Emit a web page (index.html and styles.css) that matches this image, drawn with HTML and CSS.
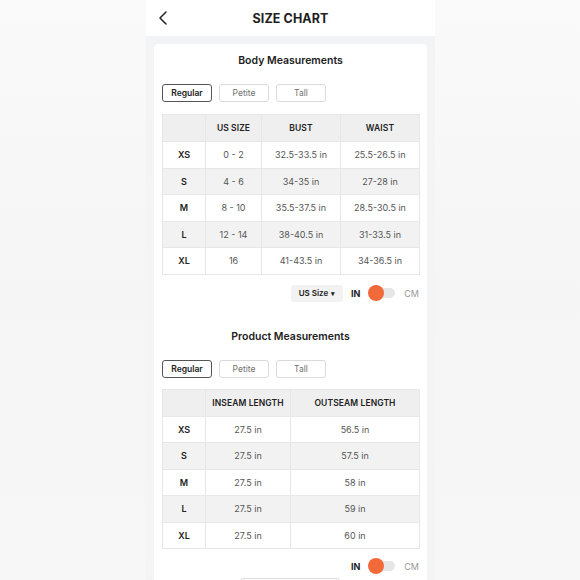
FILE: index.html
```html
<!DOCTYPE html>
<html>
<head>
<meta charset="utf-8">
<link rel="stylesheet" href="styles.css">
</head>
<body>
<div class="phone">
  <header class="header">
    <svg class="back" width="10" height="14" viewBox="0 0 10 14"><polyline points="8,1 2,7 8,13" fill="none" stroke="#222" stroke-width="1.5" stroke-linecap="round" stroke-linejoin="round"/></svg>
    <h1 class="title">SIZE CHART</h1>
  </header>
  <div class="content">
    <div class="card">
      <h2 class="section-title">Body Measurements</h2>
      <div class="tabs">
        <span class="tab active">Regular</span>
        <span class="tab">Petite</span>
        <span class="tab">Tall</span>
      </div>
      <table class="chart">
        <colgroup><col style="width:43px"><col style="width:56px"><col style="width:79px"><col style="width:79px"></colgroup>
        <tr class="head"><th></th><th>US SIZE</th><th>BUST</th><th>WAIST</th></tr>
        <tr><th>XS</th><td>0 - 2</td><td>32.5-33.5 in</td><td>25.5-26.5 in</td></tr>
        <tr class="alt"><th>S</th><td>4 - 6</td><td>34-35 in</td><td>27-28 in</td></tr>
        <tr><th>M</th><td>8 - 10</td><td>35.5-37.5 in</td><td>28.5-30.5 in</td></tr>
        <tr class="alt"><th>L</th><td>12 - 14</td><td>38-40.5 in</td><td>31-33.5 in</td></tr>
        <tr><th>XL</th><td>16</td><td>41-43.5 in</td><td>34-36.5 in</td></tr>
      </table>
      <div class="controls">
        <span class="dropdown">US Size <span class="caret">▾</span></span>
        <span class="unit on">IN</span>
        <span class="toggle"><span class="track"></span><span class="knob"></span></span>
        <span class="unit off">CM</span>
      </div>

      <h2 class="section-title second">Product Measurements</h2>
      <div class="tabs">
        <span class="tab active">Regular</span>
        <span class="tab">Petite</span>
        <span class="tab">Tall</span>
      </div>
      <table class="chart chart2">
        <colgroup><col style="width:43px"><col style="width:85px"><col style="width:129px"></colgroup>
        <tr class="head"><th></th><th>INSEAM LENGTH</th><th>OUTSEAM LENGTH</th></tr>
        <tr><th>XS</th><td>27.5 in</td><td>56.5 in</td></tr>
        <tr class="alt"><th>S</th><td>27.5 in</td><td>57.5 in</td></tr>
        <tr><th>M</th><td>27.5 in</td><td>58 in</td></tr>
        <tr class="alt"><th>L</th><td>27.5 in</td><td>59 in</td></tr>
        <tr><th>XL</th><td>27.5 in</td><td>60 in</td></tr>
      </table>
      <div class="controls controls2">
        <span class="unit on">IN</span>
        <span class="toggle"><span class="track"></span><span class="knob"></span></span>
        <span class="unit off">CM</span>
      </div>
      <div class="bottom-btn"></div>
    </div>
  </div>
</div>
</body>
</html>
```
FILE: styles.css
```css
* { box-sizing: border-box; }
html, body { margin: 0; padding: 0; }
body {
  width: 580px;
  height: 580px;
  overflow: hidden;
  background: linear-gradient(180deg, #fafafb 0%, #f5f5f6 50%, #f7f7f8 100%);
  font-family: Inter, "Noto Sans", sans-serif;
  color: #222;
}
.phone {
  width: 289px;
  height: 580px;
  margin-left: 146px;
  background: #f3f4f6;
  display: flex;
  flex-direction: column;
  overflow: hidden;
}
.header {
  height: 36px;
  flex: none;
  background: #fff;
  display: flex;
  align-items: center;
  justify-content: center;
  position: relative;
}
.back {
  position: absolute;
  left: 12px;
  top: 11px;
}
.title {
  margin: 0;
  font-size: 12.5px;
  font-weight: 700;
  letter-spacing: 0.1px;
  color: #1e1e1e;
}
.content {
  padding: 8px 8px 0;
  flex: 1;
}
.card {
  background: #fff;
  border-radius: 4px 4px 0 0;
  padding: 10px 8px 0;
  height: 100%;
}
.section-title {
  margin: 0;
  text-align: center;
  font-size: 10.5px;
  line-height: 14px;
  font-weight: 600;
  color: #222;
}
.section-title.second { margin-top: 28px; }
.tabs {
  display: flex;
  gap: 7px;
  margin-top: 16px;
}
.tab {
  width: 50px;
  height: 18px;
  border: 1px solid #dadada;
  border-radius: 3px;
  display: flex;
  align-items: center;
  justify-content: center;
  font-size: 8.5px;
  color: #6f6f6f;
}
.tab.active {
  border-color: #555;
  color: #222;
  font-weight: 600;
}
.chart {
  margin-top: 12px;
  width: 257px;
  border-collapse: collapse;
  table-layout: fixed;
}
.chart2 { margin-top: 11px; }
.chart th, .chart td {
  border: 1px solid #e7e7e7;
  height: 26.5px;
  padding: 0;
  text-align: center;
  font-size: 9px;
}
.chart td { color: #555; font-weight: 400; }
.chart th { color: #222; font-weight: 600; }
.chart tr.head th {
  background: #efefef;
  height: 27px;
  font-size: 8.5px;
  letter-spacing: 0.1px;
}
.chart tr.alt th, .chart tr.alt td { background: #f2f2f2; }
.controls {
  display: flex;
  justify-content: flex-end;
  align-items: center;
  margin-top: 10px;
  height: 17px;
}
.controls2 { margin-top: 8px; height: 18px; }
.dropdown {
  height: 17px;
  width: 52px;
  background: #f2f2f2;
  border-radius: 3px;
  display: flex;
  align-items: center;
  justify-content: center;
  font-size: 8px;
  font-weight: 600;
  color: #222;
  margin-right: 8px;
  gap: 3px;
}
.caret { font-size: 7px; }
.unit { font-size: 9px; }
.unit.on { font-weight: 700; color: #222; }
.unit.off { color: #999; }
.toggle {
  position: relative;
  width: 27px;
  height: 16px;
  margin: 0 9px 0 8px;
}
.track {
  position: absolute;
  left: 6px;
  top: 3px;
  width: 21px;
  height: 10px;
  border-radius: 5px;
  background: #e6e6e6;
}
.knob {
  position: absolute;
  left: 0;
  top: 0;
  width: 16px;
  height: 16px;
  border-radius: 50%;
  background: #f26a3a;
}
.bottom-btn {
  width: 100px;
  height: 30px;
  margin: 3px 0 0 78px;
  border: 1px solid #dcdcdc;
  border-radius: 3px;
}
```
